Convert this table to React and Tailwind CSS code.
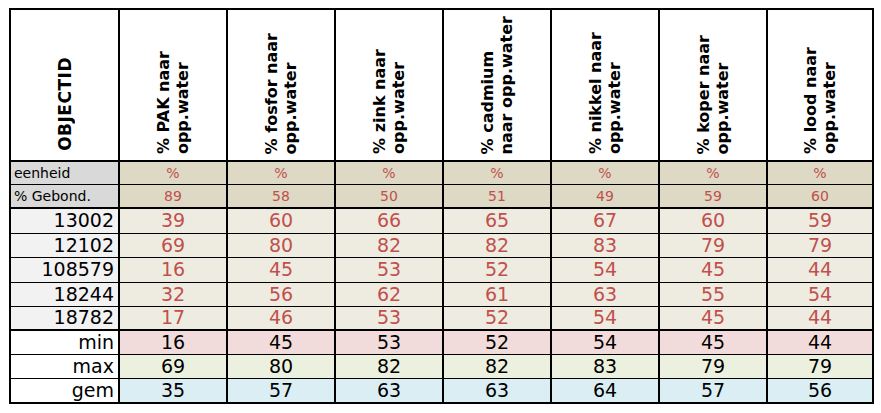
import React from 'react';

const columns = [
  ['% PAK naar', 'opp.water'],
  ['% fosfor naar', 'opp.water'],
  ['% zink naar', 'opp.water'],
  ['% cadmium', 'naar opp.water'],
  ['% nikkel naar', 'opp.water'],
  ['% koper naar', 'opp.water'],
  ['% lood naar', 'opp.water'],
];

const gebonden = [89, 58, 50, 51, 49, 59, 60];

const rows = [
  { id: '13002', values: [39, 60, 66, 65, 67, 60, 59], h: 'h-[25px]' },
  { id: '12102', values: [69, 80, 82, 82, 83, 79, 79], h: 'h-[24px]' },
  { id: '108579', values: [16, 45, 53, 52, 54, 45, 44], h: 'h-[25px]' },
  { id: '18244', values: [32, 56, 62, 61, 63, 55, 54], h: 'h-[24px]' },
  { id: '18782', values: [17, 46, 53, 52, 54, 45, 44], h: 'h-[24px]', last: true },
];

const stats = [
  { label: 'min', values: [16, 45, 53, 52, 54, 45, 44], bg: 'bg-[#f2dcdb]', h: 'h-[24px]' },
  { label: 'max', values: [69, 80, 82, 82, 83, 79, 79], bg: 'bg-[#ebf1de]', h: 'h-[24px]' },
  { label: 'gem', values: [35, 57, 63, 63, 64, 57, 56], bg: 'bg-[#dbeef3]', h: 'h-[25px]', last: true },
];

export default function App() {
  return (
    <div className="w-[881px] h-[413px] bg-white overflow-hidden pt-[8px] pl-[9px] font-['DejaVu_Sans',Verdana,sans-serif]">
      <table className="table-fixed border-collapse border-2 border-black w-[863px]">
        <colgroup>
          <col className="w-[109px]" />
          <col className="w-[108px]" />
          <col className="w-[108px]" />
          <col className="w-[108px]" />
          <col className="w-[108px]" />
          <col className="w-[108px]" />
          <col className="w-[108px]" />
          <col className="w-[106px]" />
        </colgroup>
        <thead>
          <tr className="h-[152px]">
            <th className="border-2 border-black p-0 align-bottom">
              <div className="flex items-end justify-center pb-[9px]">
                <span className="[writing-mode:vertical-rl] rotate-180 text-[17px] font-bold leading-[20px] tracking-[0.5px] text-black">
                  OBJECTID
                </span>
              </div>
            </th>
            {columns.map((c, i) => (
              <th key={i} className="border-2 border-black p-0 align-bottom">
                <div className="flex items-end justify-center pb-[6px]">
                  <span className="[writing-mode:vertical-rl] rotate-180 text-left text-[16px] font-bold leading-[19px] text-black">
                    {c[0]}
                    <br />
                    {c[1]}
                  </span>
                </div>
              </th>
            ))}
          </tr>
        </thead>
        <tbody className="text-[#c0504d]">
          <tr className="h-[23px]">
            <td className="border-x-2 border-x-black border-b border-b-black bg-[#d9d9d9] text-black text-[14px] pl-[3px] p-0 leading-none">eenheid</td>
            {columns.map((_, i) => (
              <td key={i} className="border-x-2 border-x-black border-b border-b-black bg-[#ddd9c4] text-center text-[14px] p-0 leading-none">%</td>
            ))}
          </tr>
          <tr className="h-[24px]">
            <td className="border-x-2 border-x-black border-b-2 border-b-black bg-[#d9d9d9] text-black text-[14px] pl-[3px] p-0 leading-none">% Gebond.</td>
            {gebonden.map((v, i) => (
              <td key={i} className="border-x-2 border-x-black border-b-2 border-b-black bg-[#ddd9c4] text-center text-[14px] p-0 leading-none">{v}</td>
            ))}
          </tr>
          {rows.map((r) => (
            <tr key={r.id} className={r.h}>
              <td className={`border-x-2 border-x-black ${r.last ? 'border-b-2' : 'border-b'} border-b-black bg-[#f2f2f2] text-black text-right text-[19px] pr-[4px] p-0 leading-none`}>
                {r.id}
              </td>
              {r.values.map((v, i) => (
                <td key={i} className={`border-x-2 border-x-black ${r.last ? 'border-b-2' : 'border-b'} border-b-black bg-[#eeece1] text-center text-[19px] p-0 leading-none`}>
                  {v}
                </td>
              ))}
            </tr>
          ))}
          {stats.map((s) => (
            <tr key={s.label} className={s.h}>
              <td className={`border-x-2 border-x-black ${s.last ? 'border-b-2' : 'border-b'} border-b-black bg-white text-black text-right text-[19px] pr-[4px] p-0 leading-none`}>
                {s.label}
              </td>
              {s.values.map((v, i) => (
                <td key={i} className={`border-x-2 border-x-black ${s.last ? 'border-b-2' : 'border-b'} border-b-black ${s.bg} text-black text-center text-[19px] p-0 leading-none`}>
                  {v}
                </td>
              ))}
            </tr>
          ))}
        </tbody>
      </table>
    </div>
  );
}
